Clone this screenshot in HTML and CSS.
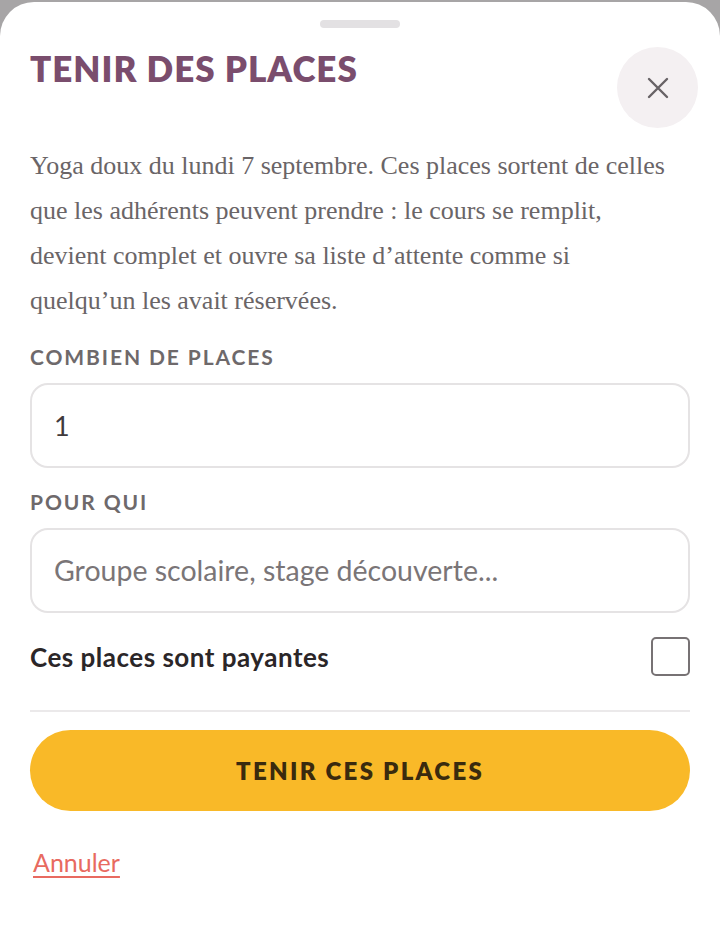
FILE: index.html
```html
<!DOCTYPE html>
<html lang="fr">
<head>
<meta charset="utf-8">
<title>Tenir des places</title>
<link rel="stylesheet" href="styles.css">
</head>
<body>
<div class="sheet">
  <div class="handle"></div>
  <header class="sheet-header">
    <h1 class="title">TENIR DES PLACES</h1>
    <button class="close" type="button" aria-label="Fermer">
      <svg width="24" height="24" viewBox="0 0 24 24" fill="none" stroke="#676266" stroke-width="2.4" stroke-linecap="round"><path d="M3 3 L21 21 M21 3 L3 21"/></svg>
    </button>
  </header>
  <p class="intro">Yoga doux du lundi 7 septembre. Ces places sortent de celles<br>que les adhérents peuvent prendre : le cours se remplit,<br>devient complet et ouvre sa liste d’attente comme si<br>quelqu’un les avait réservées.</p>
  <form class="form">
    <label class="field-label" for="nb">COMBIEN DE PLACES</label>
    <input class="field" id="nb" type="text" value="1">
    <label class="field-label" for="qui">POUR QUI</label>
    <input class="field" id="qui" type="text" placeholder="Groupe scolaire, stage découverte...">
    <div class="check-row">
      <span class="check-label">Ces places sont payantes</span>
      <span class="checkbox"></span>
    </div>
    <hr class="divider">
    <button class="primary" type="button">TENIR CES PLACES</button>
    <a class="cancel" href="#">Annuler</a>
  </form>
</div>
</body>
</html>
```
FILE: styles.css
```css
html, body {
  margin: 0;
  padding: 0;
  background: #a7a5a6;
}
body {
  padding-top: 2px;
  font-family: Lato, "Noto Sans", sans-serif;
}
.sheet {
  background: #ffffff;
  border-radius: 34px 34px 0 0;
  min-height: 929px;
  padding: 0 30px;
  box-sizing: border-box;
  overflow: hidden;
}
.handle {
  width: 80px;
  height: 8px;
  border-radius: 4px;
  background: #e3e1e3;
  margin: 18px auto 0;
}
.sheet-header {
  display: flex;
  justify-content: space-between;
  align-items: flex-start;
  margin-top: 19px;
}
.title {
  margin: 0;
  font-size: 35px;
  line-height: 42px;
  font-weight: 800;
  letter-spacing: 1px;
  color: #7a4d6d;
}
.close {
  width: 81px;
  height: 81px;
  border-radius: 50%;
  border: none;
  background: #f4f0f2;
  margin-right: -8px;
  display: flex;
  align-items: center;
  justify-content: center;
  padding: 0;
}
.intro {
  margin: 15px 0 0;
  font-family: "Liberation Serif", "DejaVu Serif", serif;
  font-size: 26px;
  line-height: 45px;
  color: #6a6567;
  white-space: nowrap;
}
.form {
  display: flex;
  flex-direction: column;
}
.field-label {
  margin-top: 21px;
  font-size: 21px;
  line-height: 26px;
  font-weight: 700;
  letter-spacing: 1.9px;
  color: #6e696b;
}
.field {
  margin-top: 13px;
  height: 85px;
  box-sizing: border-box;
  border: 2px solid #e5e3e4;
  border-radius: 18px;
  padding: 0 22px;
  font-family: Lato, "Noto Sans", sans-serif;
  font-size: 27px;
  color: #3f3a3c;
  outline: none;
  background: #fff;
}
.field::placeholder {
  color: #7a7577;
  font-size: 28.5px;
}
.check-row {
  margin-top: 24px;
  display: flex;
  justify-content: space-between;
  align-items: center;
}
.check-label {
  font-size: 26px;
  font-weight: 700;
  letter-spacing: 0.5px;
  color: #2b2628;
}
.checkbox {
  width: 39px;
  height: 39px;
  box-sizing: border-box;
  border: 2px solid #777274;
  border-radius: 5px;
}
.divider {
  margin: 34px 0 0;
  border: none;
  height: 2px;
  background: #ebe9ea;
}
.primary {
  margin-top: 18px;
  height: 81px;
  border: none;
  border-radius: 41px;
  background: #f9b928;
  font-family: Lato, "Noto Sans", sans-serif;
  font-size: 24px;
  font-weight: 800;
  letter-spacing: 2.3px;
  color: #3a2a0e;
}
.cancel {
  margin-top: 36px;
  align-self: flex-start;
  margin-left: 3px;
  font-size: 25px;
  color: #e86a60;
  text-decoration: underline;
  text-underline-offset: 4px;
  text-decoration-thickness: 1.5px;
}
```
